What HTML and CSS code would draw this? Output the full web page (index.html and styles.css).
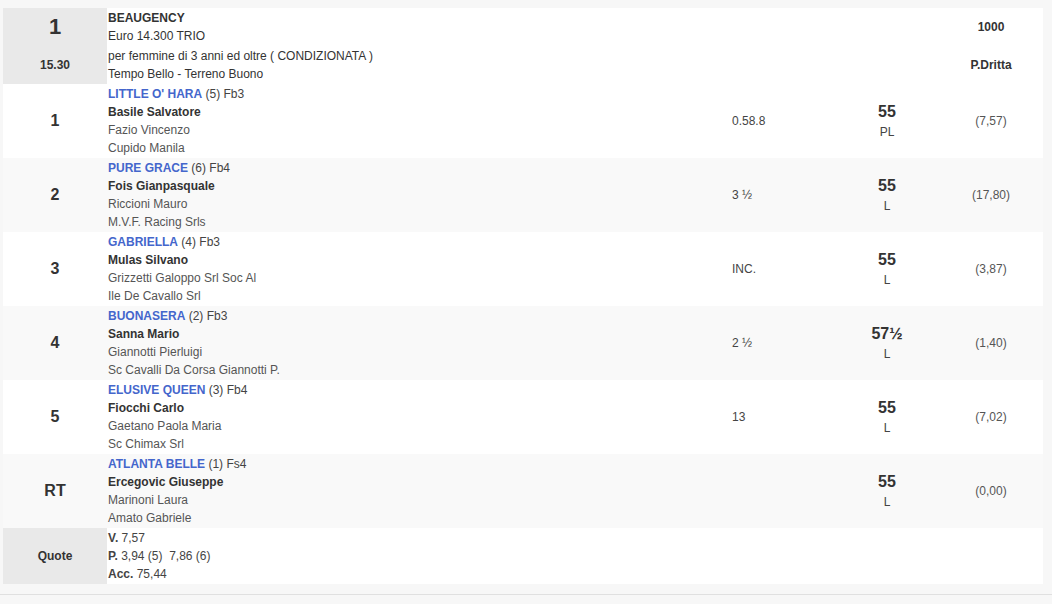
FILE: index.html
```html
<!DOCTYPE html>
<html lang="it">
<head>
<meta charset="utf-8">
<title>Beaugency</title>
<link rel="stylesheet" href="styles.css">
</head>
<body>
<div class="wrap">
<table class="race">
  <colgroup>
    <col class="c-num"><col class="c-horse"><col class="c-time"><col class="c-weight"><col class="c-odds">
  </colgroup>
  <tr class="head">
    <td class="side">
      <div class="half big">1</div>
      <div class="half">15.30</div>
    </td>
    <td class="info">
      <div class="ln b">BEAUGENCY</div>
      <div class="ln">Euro 14.300 TRIO</div>
      <div class="ln gap">per femmine di 3 anni ed oltre ( CONDIZIONATA )</div>
      <div class="ln">Tempo Bello - Terreno Buono</div>
    </td>
    <td></td>
    <td></td>
    <td class="ctr">
      <div class="half b">1000</div>
      <div class="half b">P.Dritta</div>
    </td>
  </tr>
  <tr class="row">
    <td class="pos">1</td>
    <td class="horse"><div class="ln"><span class="name">LITTLE O' HARA</span> (5) Fb3</div><div class="ln jk">Basile Salvatore</div><div class="ln sub">Fazio Vincenzo</div><div class="ln sub">Cupido Manila</div></td>
    <td class="time">0.58.8</td>
    <td class="wt"><div class="kg">55</div><div class="ln">PL</div></td>
    <td class="odds">(7,57)</td>
  </tr>
  <tr class="row alt">
    <td class="pos">2</td>
    <td class="horse"><div class="ln"><span class="name">PURE GRACE</span> (6) Fb4</div><div class="ln jk">Fois Gianpasquale</div><div class="ln sub">Riccioni Mauro</div><div class="ln sub">M.V.F. Racing Srls</div></td>
    <td class="time">3 ½</td>
    <td class="wt"><div class="kg">55</div><div class="ln">L</div></td>
    <td class="odds">(17,80)</td>
  </tr>
  <tr class="row">
    <td class="pos">3</td>
    <td class="horse"><div class="ln"><span class="name">GABRIELLA</span> (4) Fb3</div><div class="ln jk">Mulas Silvano</div><div class="ln sub">Grizzetti Galoppo Srl Soc Al</div><div class="ln sub">Ile De Cavallo Srl</div></td>
    <td class="time">INC.</td>
    <td class="wt"><div class="kg">55</div><div class="ln">L</div></td>
    <td class="odds">(3,87)</td>
  </tr>
  <tr class="row alt">
    <td class="pos">4</td>
    <td class="horse"><div class="ln"><span class="name">BUONASERA</span> (2) Fb3</div><div class="ln jk">Sanna Mario</div><div class="ln sub">Giannotti Pierluigi</div><div class="ln sub">Sc Cavalli Da Corsa Giannotti P.</div></td>
    <td class="time">2 ½</td>
    <td class="wt"><div class="kg">57½</div><div class="ln">L</div></td>
    <td class="odds">(1,40)</td>
  </tr>
  <tr class="row">
    <td class="pos">5</td>
    <td class="horse"><div class="ln"><span class="name">ELUSIVE QUEEN</span> (3) Fb4</div><div class="ln jk">Fiocchi Carlo</div><div class="ln sub">Gaetano Paola Maria</div><div class="ln sub">Sc Chimax Srl</div></td>
    <td class="time">13</td>
    <td class="wt"><div class="kg">55</div><div class="ln">L</div></td>
    <td class="odds">(7,02)</td>
  </tr>
  <tr class="row alt">
    <td class="pos">RT</td>
    <td class="horse"><div class="ln"><span class="name">ATLANTA BELLE</span> (1) Fs4</div><div class="ln jk">Ercegovic Giuseppe</div><div class="ln sub">Marinoni Laura</div><div class="ln sub">Amato Gabriele</div></td>
    <td class="time"></td>
    <td class="wt"><div class="kg">55</div><div class="ln">L</div></td>
    <td class="odds">(0,00)</td>
  </tr>
  <tr class="quote">
    <td class="side qlabel">Quote</td>
    <td class="horse"><div class="ln"><b>V.</b> 7,57</div><div class="ln"><b>P.</b> 3,94 (5)&nbsp; 7,86 (6)</div><div class="ln"><b>Acc.</b> 75,44</div></td>
    <td></td>
    <td></td>
    <td></td>
  </tr>
</table>
</div>
<div class="rule"></div>
</body>
</html>
```
FILE: styles.css
```css
html, body {
  margin: 0;
  padding: 0;
  background: #f7f7f7;
  font-family: "Liberation Sans", Arial, sans-serif;
  font-size: 12px;
  color: #333;
}
.wrap {
  padding: 8px 9px 0 3px;
}
.race {
  width: 100%;
  border-collapse: collapse;
  table-layout: fixed;
  background: #fff;
}
.c-num { width: 104px; }
.c-horse { width: auto; }
.c-time { width: 104px; }
.c-weight { width: 104px; }
.c-odds { width: 104px; }
.race td {
  padding: 1px;
  vertical-align: middle;
}
.ln {
  line-height: 18px;
  height: 18px;
  white-space: nowrap;
}
.b { font-weight: bold; }
.gap { margin-top: 2px; }
.head td { padding: 0; }
.head .info { padding: 1px; }
.side {
  background: #e9e9e9;
  text-align: center;
  font-weight: bold;
}
.half {
  height: 38px;
  line-height: 38px;
  text-align: center;
}
.side .half { font-size: 12px; }
.side .big { font-size: 22px; }
.ctr { text-align: center; }
.row.alt { background: #f9f9f9; }
.pos {
  text-align: center;
  font-weight: bold;
  font-size: 16px;
}
.horse { color: #444; }
.name {
  color: #4466cc;
  font-weight: bold;
}
.jk { font-weight: bold; color: #333; }
.sub { color: #555; }
.time { color: #444; }
.wt { text-align: center; }
.kg {
  font-weight: bold;
  font-size: 16px;
  line-height: 20px;
}
.wt .ln { color: #444; height: 18px; margin-top: 1px; }
.odds { text-align: center; color: #555; }
.quote .qlabel { font-size: 12px; }
.rule {
  margin-top: 10px;
  border-top: 1px solid #e0e0e0;
  height: 10px;
}
```
